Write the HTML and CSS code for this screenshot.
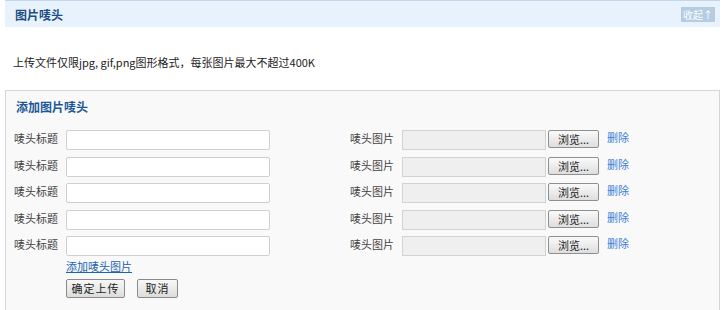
FILE: index.html
```html
<!DOCTYPE html>
<html lang="zh-CN">
<head>
    <meta charset="UTF-8">
    <title>图片唛头</title>
    <link rel="stylesheet" href="styles.css">
</head>
<body>

    <div class="head-bar">
        <h3>图片唛头</h3>
        <a class="fold-btn" href="#">收起↑</a>
    </div>

    <p class="tip">上传文件仅限jpg, gif,png图形格式，每张图片最大不超过400K</p>

    <div class="panel">
        <h4>添加图片唛头</h4>

        <form id="markForm">
            <div class="row">
                <label class="lbl">唛头标题</label>
                <input type="text" class="txt">
                <label class="lbl lbl-img">唛头图片</label>
                <span class="file-box"></span>
                <button type="button" class="browse">浏览...</button>
                <a class="del" href="#">删除</a>
            </div>
            <div class="row">
                <label class="lbl">唛头标题</label>
                <input type="text" class="txt">
                <label class="lbl lbl-img">唛头图片</label>
                <span class="file-box"></span>
                <button type="button" class="browse">浏览...</button>
                <a class="del" href="#">删除</a>
            </div>
            <div class="row">
                <label class="lbl">唛头标题</label>
                <input type="text" class="txt">
                <label class="lbl lbl-img">唛头图片</label>
                <span class="file-box"></span>
                <button type="button" class="browse">浏览...</button>
                <a class="del" href="#">删除</a>
            </div>
            <div class="row">
                <label class="lbl">唛头标题</label>
                <input type="text" class="txt">
                <label class="lbl lbl-img">唛头图片</label>
                <span class="file-box"></span>
                <button type="button" class="browse">浏览...</button>
                <a class="del" href="#">删除</a>
            </div>
            <div class="row">
                <label class="lbl">唛头标题</label>
                <input type="text" class="txt">
                <label class="lbl lbl-img">唛头图片</label>
                <span class="file-box"></span>
                <button type="button" class="browse">浏览...</button>
                <a class="del" href="#">删除</a>
            </div>

            <div class="actions">
                <a class="add-link" href="#">添加唛头图片</a>
                <div class="btns">
                    <button type="submit" class="btn">确定上传</button>
                    <button type="button" class="btn btn-cancel">取消</button>
                </div>
            </div>
        </form>
    </div>

</body>
</html>
```

FILE: styles.css
```css
body {
    margin: 0;
    padding: 0 8px 0 5px;
    font-family: "Noto Sans CJK SC", "Liberation Sans", sans-serif;
    font-size: 11px;
    color: #333;
    background: #fff;
}
.head-bar {
    display: flex;
    align-items: center;
    justify-content: space-between;
    height: 26px;
    padding: 0 5px 0 10px;
    background: #e8f2fc;
    border-top: 1px solid #c3d6ea;
}
.head-bar h3 {
    margin: 0;
    font-size: 12px;
    font-weight: bold;
    color: #1e4e84;
}
.fold-btn {
    padding: 0 2px;
    line-height: 15px;
    font-size: 10px;
    color: #fff;
    background: #b5cde2;
    text-decoration: none;
}
.tip {
    margin: 0;
    padding: 27px 0 0 8px;
    height: 36px;
    font-size: 11px;
    color: #222;
}
.panel {
    height: 220px;
    background: #f9f9f9;
    border: 1px solid #d6d6d6;
    border-bottom: none;
    padding: 0 0 0 8px;
}
.panel h4 {
    margin: 0;
    padding: 7px 0 0 2px;
    height: 32px;
    font-size: 12px;
    font-weight: bold;
    color: #1d5797;
}
.row {
    display: flex;
    align-items: flex-start;
    height: 26.5px;
}
.lbl {
    width: 52px;
    line-height: 16px;
    color: #444;
}
.txt {
    width: 200px;
    height: 16px;
    margin: 0;
    padding: 1px;
    border: 1px solid #cfcfcf;
    border-radius: 2px;
    background: #fff;
}
.lbl-img {
    margin-left: 80px;
}
.file-box {
    display: block;
    width: 142px;
    height: 18px;
    border: 1px solid #d2d2d2;
    background: #efefef;
}
.browse {
    margin: 0 0 0 2px;
    width: 51px;
    height: 18px;
    padding: 0;
    font-family: inherit;
    font-size: 11px;
    color: #222;
    border: 1px solid #8f8f8f;
    border-radius: 2px;
    background: linear-gradient(#fafafa, #dedede);
}
.del {
    margin-left: 8px;
    line-height: 14px;
    color: #3b7fd7;
    text-decoration: none;
}
.actions {
    margin-top: -4px;
    padding-left: 52px;
    line-height: 14px;
}
.add-link {
    color: #1b63b3;
    text-decoration: underline;
}
.btns {
    display: flex;
    gap: 12px;
    margin-top: 6px;
}
.btn {
    width: 59px;
    height: 19px;
    padding: 0;
    font-family: inherit;
    font-size: 11px;
    letter-spacing: 1px;
    color: #222;
    border: 1px solid #8a8a8a;
    border-radius: 2px;
    background: linear-gradient(#f8f8f8, #dcdcdc);
}
.btn-cancel {
    width: 41px;
}
```
